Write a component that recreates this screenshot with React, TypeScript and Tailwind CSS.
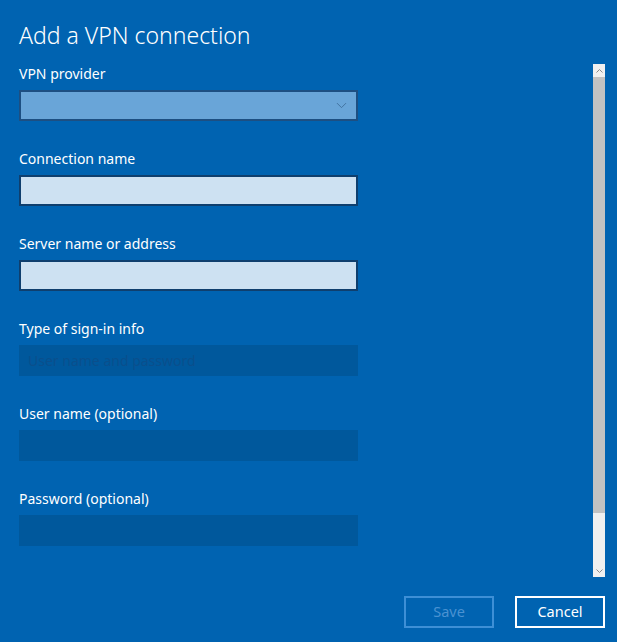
import { ChevronDown } from "lucide-react"

const font = { fontFamily: '"Noto Sans", "Open Sans", sans-serif' }

function Field({
  label,
  variant,
  placeholder,
  first
}: {
  label: string
  variant: "select" | "input" | "disabled"
  placeholder?: string
  first?: boolean
}) {
  return (
    <div className={first ? "" : "mt-[26px]"}>
      <div className="mb-[4px] h-[24px] text-[14px] leading-[24px] text-white">{label}</div>
      {variant === "select" && (
        <div className="flex h-[31px] w-[339px] items-center justify-end border-2 border-[#1d4f82] bg-[#69a5d8] pr-[6px]">
          <ChevronDown className="h-[17px] w-[17px] text-[#3f6f9c]" strokeWidth={1.3} />
        </div>
      )}
      {variant === "input" && (
        <div className="h-[31px] w-[339px] border-2 border-[#0f3f6e] bg-[#cde1f2]" />
      )}
      {variant === "disabled" && (
        <div className="flex h-[31px] w-[339px] items-center bg-[#00589c] pl-[9px] text-[14px] text-[#0a4f8c]">
          {placeholder}
        </div>
      )}
    </div>
  )
}

export default function App() {
  return (
    <div className="flex h-[642px] w-[617px] flex-col bg-[#0063b1]" style={font}>
      <div className="flex h-[577px]">
        <div className="flex-1 pl-[19px] pt-[19px]">
          <h1 className="text-[23px] font-light leading-[32px] text-white">Add a VPN connection</h1>
          <div className="mt-[11px]">
            <Field first label="VPN provider" variant="select" />
            <Field label="Connection name" variant="input" />
            <Field label="Server name or address" variant="input" />
            <Field label="Type of sign-in info" variant="disabled" placeholder="User name and password" />
            <Field label="User name (optional)" variant="disabled" />
            <Field label="Password (optional)" variant="disabled" />
          </div>
        </div>
        <div className="mr-[12px] mt-[64px] flex w-[12px] flex-col bg-[#f0f0f0]">
          <div className="flex h-[13px] items-center justify-center">
            <svg width="7" height="4" viewBox="0 0 7 4">
              <path d="M0.5 3.5 L3.5 0.5 L6.5 3.5" fill="none" stroke="#8a8a8a" strokeWidth="1" />
            </svg>
          </div>
          <div className="h-[436px] bg-[#c2c2c2]" />
          <div className="flex-1" />
          <div className="flex h-[13px] items-center justify-center">
            <svg width="7" height="4" viewBox="0 0 7 4">
              <path d="M0.5 0.5 L3.5 3.5 L6.5 0.5" fill="none" stroke="#8a8a8a" strokeWidth="1" />
            </svg>
          </div>
        </div>
      </div>
      <div className="mt-[19px] flex justify-end gap-[21px] pr-[12px]">
        <button
          type="button"
          disabled
          className="h-[32px] w-[90px] border-2 border-[#3d8fd6] text-[14.5px] text-[#4a92d2]"
        >
          Save
        </button>
        <button
          type="button"
          className="h-[32px] w-[90px] border-2 border-white text-[14.5px] text-white"
        >
          Cancel
        </button>
      </div>
    </div>
  )
}
